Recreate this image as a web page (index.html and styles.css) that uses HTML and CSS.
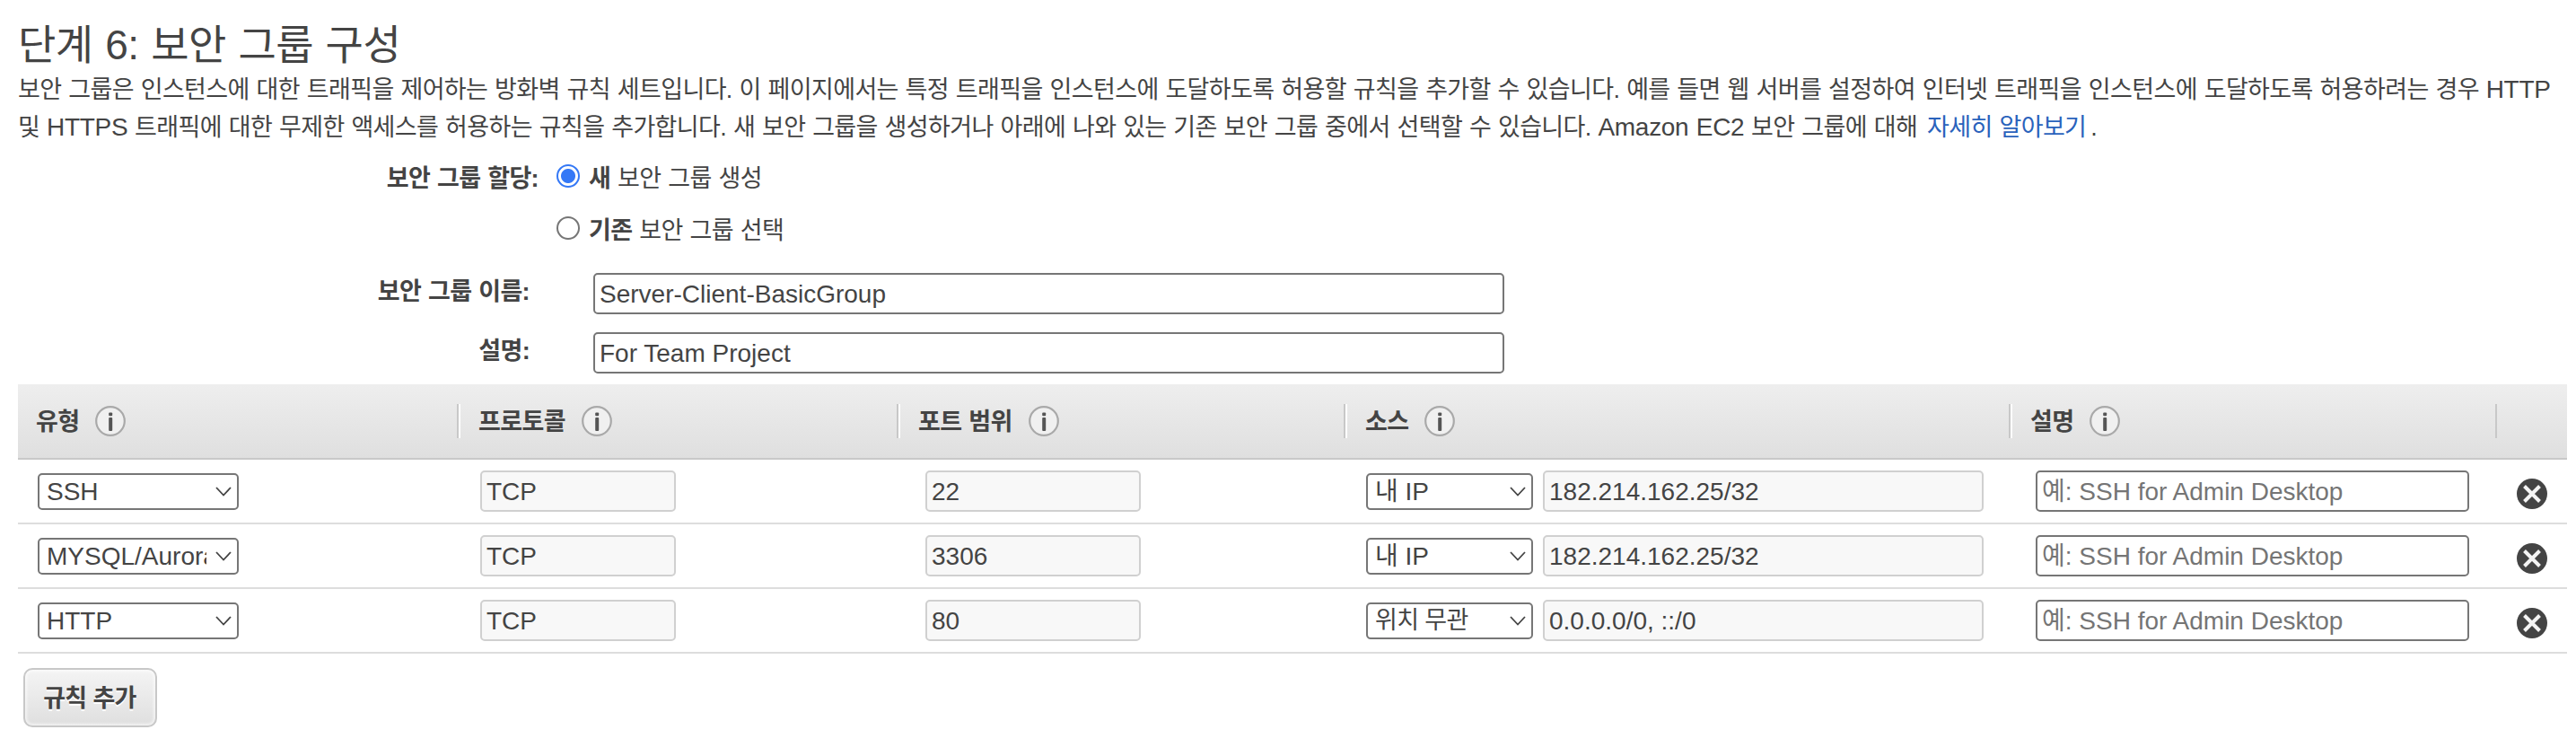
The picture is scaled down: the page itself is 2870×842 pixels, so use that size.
FILE: index.html
```html
<!DOCTYPE html>
<html lang="ko">
<head>
    <meta charset="UTF-8">
    <meta name="viewport" content="width=device-width, initial-scale=1.0">
    <title>단계 6: 보안 그룹 구성</title>
    <link rel="stylesheet" href="styles.css">
</head>
<body>
    <svg class="sprite" width="0" height="0">
        <symbol id="info" viewBox="0 0 34 34">
            <circle cx="17" cy="17" r="15.8" fill="#f0f0f0" stroke="#a9a9a9" stroke-width="2.2"/>
            <rect x="15.2" y="7.5" width="4" height="3.8" rx="1" fill="#555"/>
            <rect x="15.2" y="13" width="4" height="15" rx="1" fill="#555"/>
        </symbol>
        <symbol id="remove" viewBox="0 0 34 34">
            <circle cx="17" cy="17" r="17" fill="#444"/>
            <path d="M8.5 8.5 25.5 25.5 M25.5 8.5 8.5 25.5" stroke="#f4f4f4" stroke-width="4" fill="none"/>
        </symbol>
        <symbol id="arrow" viewBox="0 0 18 11">
            <path d="M1 1 9 9.5 17 1" stroke="#444" stroke-width="1.8" fill="none"/>
        </symbol>
    </svg>

    <div class="container">
        <h1>단계 6: 보안 그룹 구성</h1>
        <p class="intro">보안 그룹은 인스턴스에 대한 트래픽을 제어하는 방화벽 규칙 세트입니다. 이 페이지에서는 특정 트래픽을 인스턴스에 도달하도록 허용할 규칙을 추가할 수 있습니다. 예를 들면 웹 서버를 설정하여 인터넷 트래픽을 인스턴스에 도달하도록 허용하려는 경우 <span class="latin">HTTP</span><br>및 <span class="latin">HTTPS</span> 트래픽에 대한 무제한 액세스를 허용하는 규칙을 추가합니다. 새 보안 그룹을 생성하거나 아래에 나와 있는 기존 보안 그룹 중에서 선택할 수 있습니다. <span class="latin">Amazon EC2</span> 보안 그룹에 대해 <a href="#">자세히 알아보기</a>.</p>

        <div class="assign">
            <span class="assign-label">보안 그룹 할당:</span>
            <div class="assign-options">
                <label><input type="radio" name="assign" checked><span><b>새</b> 보안 그룹 생성</span></label>
                <label><input type="radio" name="assign"><span><b>기존</b> 보안 그룹 선택</span></label>
            </div>
        </div>

        <div class="form-group">
            <label for="name">보안 그룹 이름:</label>
            <input type="text" id="name" value="Server-Client-BasicGroup">
            <label for="description">설명:</label>
            <input type="text" id="description" value="For Team Project">
        </div>

        <div class="rules">
            <div class="row head">
                <div class="cell"><span>유형</span><svg class="info"><use href="#info"/></svg></div>
                <div class="cell"><span>프로토콜</span><svg class="info"><use href="#info"/></svg></div>
                <div class="cell"><span>포트 범위</span><svg class="info"><use href="#info"/></svg></div>
                <div class="cell"><span>소스</span><svg class="info"><use href="#info"/></svg></div>
                <div class="cell"><span>설명</span><svg class="info"><use href="#info"/></svg></div>
                <div class="cell last"></div>
            </div>
            <div class="row">
                <div class="cell"><div class="select type"><select><option>SSH</option></select><svg><use href="#arrow"/></svg></div></div>
                <div class="cell"><input type="text" class="protocol" value="TCP" disabled></div>
                <div class="cell port-cell"><input type="text" class="port" value="22" disabled></div>
                <div class="cell source-cell"><div class="select source"><select><option>내 IP</option></select><svg><use href="#arrow"/></svg></div><input type="text" class="cidr" value="182.214.162.25/32" disabled></div>
                <div class="cell desc-cell"><input type="text" class="desc" placeholder="예: SSH for Admin Desktop"></div>
                <div class="cell remove-cell"><svg class="remove"><use href="#remove"/></svg></div>
            </div>
            <div class="row">
                <div class="cell"><div class="select type"><select><option>MYSQL/Aurora</option></select><svg><use href="#arrow"/></svg></div></div>
                <div class="cell"><input type="text" class="protocol" value="TCP" disabled></div>
                <div class="cell port-cell"><input type="text" class="port" value="3306" disabled></div>
                <div class="cell source-cell"><div class="select source"><select><option>내 IP</option></select><svg><use href="#arrow"/></svg></div><input type="text" class="cidr" value="182.214.162.25/32" disabled></div>
                <div class="cell desc-cell"><input type="text" class="desc" placeholder="예: SSH for Admin Desktop"></div>
                <div class="cell remove-cell"><svg class="remove"><use href="#remove"/></svg></div>
            </div>
            <div class="row">
                <div class="cell"><div class="select type"><select><option>HTTP</option></select><svg><use href="#arrow"/></svg></div></div>
                <div class="cell"><input type="text" class="protocol" value="TCP" disabled></div>
                <div class="cell port-cell"><input type="text" class="port" value="80" disabled></div>
                <div class="cell source-cell"><div class="select source korean"><select><option>위치 무관</option></select><svg><use href="#arrow"/></svg></div><input type="text" class="cidr" value="0.0.0.0/0, ::/0" disabled></div>
                <div class="cell desc-cell"><input type="text" class="desc" placeholder="예: SSH for Admin Desktop"></div>
                <div class="cell remove-cell"><svg class="remove"><use href="#remove"/></svg></div>
            </div>
        </div>

        <button class="add-btn">규칙 추가</button>
    </div>
</body>
</html>
```

FILE: styles.css
```css
* {
    box-sizing: border-box;
}
body {
    margin: 0;
    font-family: "Liberation Sans", "Noto Sans CJK KR", sans-serif;
    font-size: 27px;
    letter-spacing: -0.62px;
    word-spacing: 0.9px;
    color: #444;
    background-color: #fff;
}
.sprite {
    position: absolute;
}
.container {
    padding: 22px 10px 0 20px;
}
h1 {
    margin: 0;
    font-size: 46px;
    font-weight: normal;
    letter-spacing: -0.5px;
    word-spacing: 1.3px;
    line-height: 57px;
}
.intro {
    margin: 0;
    line-height: 42px;
    white-space: nowrap;
}
.latin {
    font-size: 28px;
    letter-spacing: -0.3px;
}
.intro a {
    color: #2a62bc;
    text-decoration: none;
    margin: 0 5px 0 3px;
}
.assign {
    display: flex;
    margin-top: 7px;
    line-height: 58px;
}
.assign-label {
    width: 580px;
    text-align: right;
    font-weight: bold;
}
.assign-options {
    margin-left: 20px;
}
.assign-options label {
    display: flex;
    height: 58px;
}
input[type="radio"] {
    width: 26px;
    height: 26px;
    margin: 13px 10px 0 0;
    appearance: none;
    border: 2px solid #767676;
    border-radius: 50%;
    background-color: #fff;
}
input[type="radio"]:checked {
    border-color: #3478f6;
    background: radial-gradient(circle, #3478f6 7.5px, #fff 8.5px);
}
.form-group {
    display: grid;
    grid-template-columns: 570px 1015px;
    column-gap: 71px;
    row-gap: 20px;
    margin-top: 18px;
}
.form-group label {
    text-align: right;
    font-weight: bold;
    line-height: 43px;
}
input[type="text"] {
    height: 46px;
    padding: 3px 4px 1px 5px;
    border: 2px solid #767676;
    border-radius: 5px;
    font-family: inherit;
    font-size: 28px;
    color: #444;
    background-color: #fff;
}
input[type="text"]:disabled {
    border-color: #d0d0d0;
    background-color: #f8f8f8;
}
input::placeholder {
    color: #757575;
}
.rules {
    margin-top: 12px;
}
.row {
    display: grid;
    grid-template-columns: 489px 490px 498px 741px 542px 80px;
    height: 72px;
    border-bottom: 2px solid #ddd;
}
.cell {
    display: flex;
    align-items: center;
    padding-left: 26px;
}
.cell:first-child {
    padding-left: 22px;
}
.port-cell {
    padding-left: 32px;
}
.source-cell {
    padding-left: 25px;
}
.desc-cell {
    padding-left: 30px;
}
.remove-cell {
    padding: 5px 0 0 24px;
}
.head {
    height: 84px;
    align-items: center;
    border-bottom: 2px solid #c8c8c8;
    background: linear-gradient(#eee, #dfdfdf);
    font-weight: bold;
}
.head .cell {
    height: 38px;
    padding-left: 22px;
    border-left: 2px solid #c8c8c8;
    box-shadow: inset 2px 0 #fff;
}
.head .cell:first-child {
    padding-left: 20px;
    border: none;
    box-shadow: none;
}
.head .last {
    box-shadow: none;
}
.head span {
    padding-bottom: 3px;
}
.info {
    width: 34px;
    height: 34px;
    margin-left: 18px;
}
.select {
    position: relative;
    height: 41px;
}
.select select {
    width: 100%;
    height: 41px;
    padding: 0 34px 0 8px;
    appearance: none;
    border: 2px solid #767676;
    border-radius: 5px;
    font-family: inherit;
    font-size: 28px;
    color: #444;
    background-color: #fff;
}
.select svg {
    position: absolute;
    right: 8px;
    top: 15px;
    width: 18px;
    height: 11px;
}
.korean select {
    font-size: 27px;
    letter-spacing: -0.64px;
}
.type {
    width: 224px;
}
.source {
    width: 186px;
    margin-right: 11px;
}
.protocol {
    width: 218px;
}
.port {
    width: 240px;
}
.cidr {
    width: 491px;
}
.desc {
    width: 483px;
}
.remove {
    width: 34px;
    height: 34px;
}
.add-btn {
    display: block;
    width: 149px;
    height: 66px;
    margin: 16px 0 0 6px;
    padding: 0 1px 4px 0;
    border: 2px solid #c8c8c8;
    border-radius: 10px;
    background: linear-gradient(#f4f4f4, #dfdfdf);
    box-shadow: inset 0 0 3px 2px rgba(255, 255, 255, 0.6);
    font-family: inherit;
    font-size: 27px;
    font-weight: bold;
    letter-spacing: -0.64px;
    color: #444;
    text-shadow: 0 2px #fff;
}
```
